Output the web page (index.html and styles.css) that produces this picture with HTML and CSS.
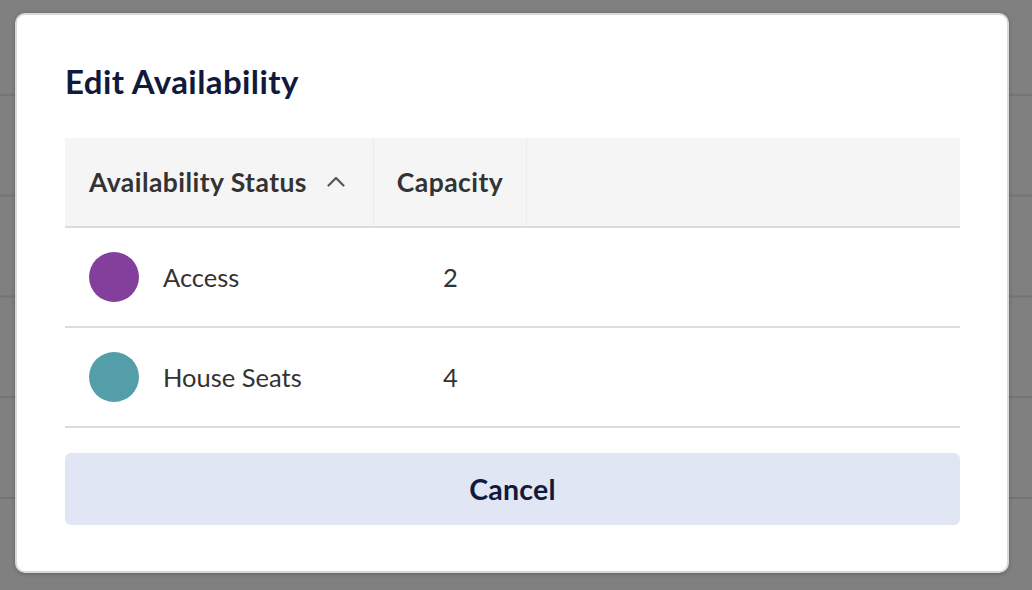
FILE: index.html
```html
<!DOCTYPE html>
<html lang="en">
<head>
<meta charset="utf-8">
<title>Edit Availability</title>
<link rel="stylesheet" href="styles.css">
</head>
<body>
<div class="backdrop">
  <div class="modal" role="dialog" aria-labelledby="modal-title">
    <h2 class="title" id="modal-title">Edit Availability</h2>
    <div class="table">
      <div class="row head">
        <div class="cell status-head">
          <span>Availability Status</span>
          <svg class="chevron" width="18" height="11" viewBox="0 0 18 11" aria-hidden="true">
            <path d="M1.5 9.5 L9 2 L16.5 9.5" fill="none" stroke="#555" stroke-width="2.2" stroke-linecap="round" stroke-linejoin="round"/>
          </svg>
        </div>
        <div class="cell capacity">Capacity</div>
        <div class="cell filler"></div>
      </div>
      <div class="row">
        <div class="cell status"><span class="dot dot-purple"></span><span>Access</span></div>
        <div class="cell capacity num">2</div>
        <div class="cell filler"></div>
      </div>
      <div class="row">
        <div class="cell status"><span class="dot dot-teal"></span><span>House Seats</span></div>
        <div class="cell capacity num">4</div>
        <div class="cell filler"></div>
      </div>
    </div>
    <button class="cancel" type="button">Cancel</button>
  </div>
</div>
</body>
</html>
```

FILE: styles.css
```css
* { box-sizing: border-box; }

html, body {
  margin: 0;
  height: 100%;
}

body {
  font-family: Lato, "Open Sans", "Liberation Sans", sans-serif;
  background-color: #808080;
  background-image: linear-gradient(to bottom, transparent 0, transparent 93.5px, #747474 93.5px, #747474 95.5px, transparent 95.5px);
  background-size: 100% 100.8px;
  background-repeat: repeat-y;
  overflow: hidden;
}

.backdrop {
  padding: 13px 23px 0 15px;
}

.modal {
  width: 994px;
  height: 560px;
  background: #ffffff;
  border: 2px solid #d9d9d9;
  border-radius: 10px;
  box-shadow: 0 1px 4px rgba(0, 0, 0, 0.25);
  padding: 48px 47px 0 48px;
}

.title {
  margin: 0;
  font-size: 33px;
  line-height: 36px;
  letter-spacing: 0.42px;
  font-weight: 700;
  color: #111a3d;
}

.table {
  margin-top: 39px;
}

.row {
  display: grid;
  grid-template-columns: 309px 153px 1fr;
  height: 100px;
  border-bottom: 2px solid #dcdcdc;
}

.row.head {
  height: 90px;
  background: #f5f5f5;
}

.cell {
  display: flex;
  align-items: center;
  font-size: 25.5px;
  color: #333333;
}

.head .cell {
  font-size: 26.5px;
  letter-spacing: 0.45px;
  font-weight: 700;
  border-right: 1px solid #ececec;
}

.head .cell.filler {
  border-right: none;
}

.status-head {
  padding-left: 24px;
  gap: 20px;
}

.chevron {
  display: block;
  margin-top: -2px;
}

.capacity {
  justify-content: center;
}

.status {
  padding-left: 24px;
  gap: 24px;
}

.dot {
  width: 50px;
  height: 50px;
  border-radius: 50%;
  flex: none;
}

.dot-purple { background: #843f9d; }
.dot-teal { background: #539ea8; }

.cancel {
  display: block;
  width: 100%;
  height: 72px;
  margin-top: 25px;
  border: none;
  border-radius: 6px;
  background: #e0e6f3;
  font-family: Lato, "Open Sans", "Liberation Sans", sans-serif;
  font-size: 28.5px;
  letter-spacing: 0.2px;
  font-weight: 700;
  color: #111a3d;
}
```
